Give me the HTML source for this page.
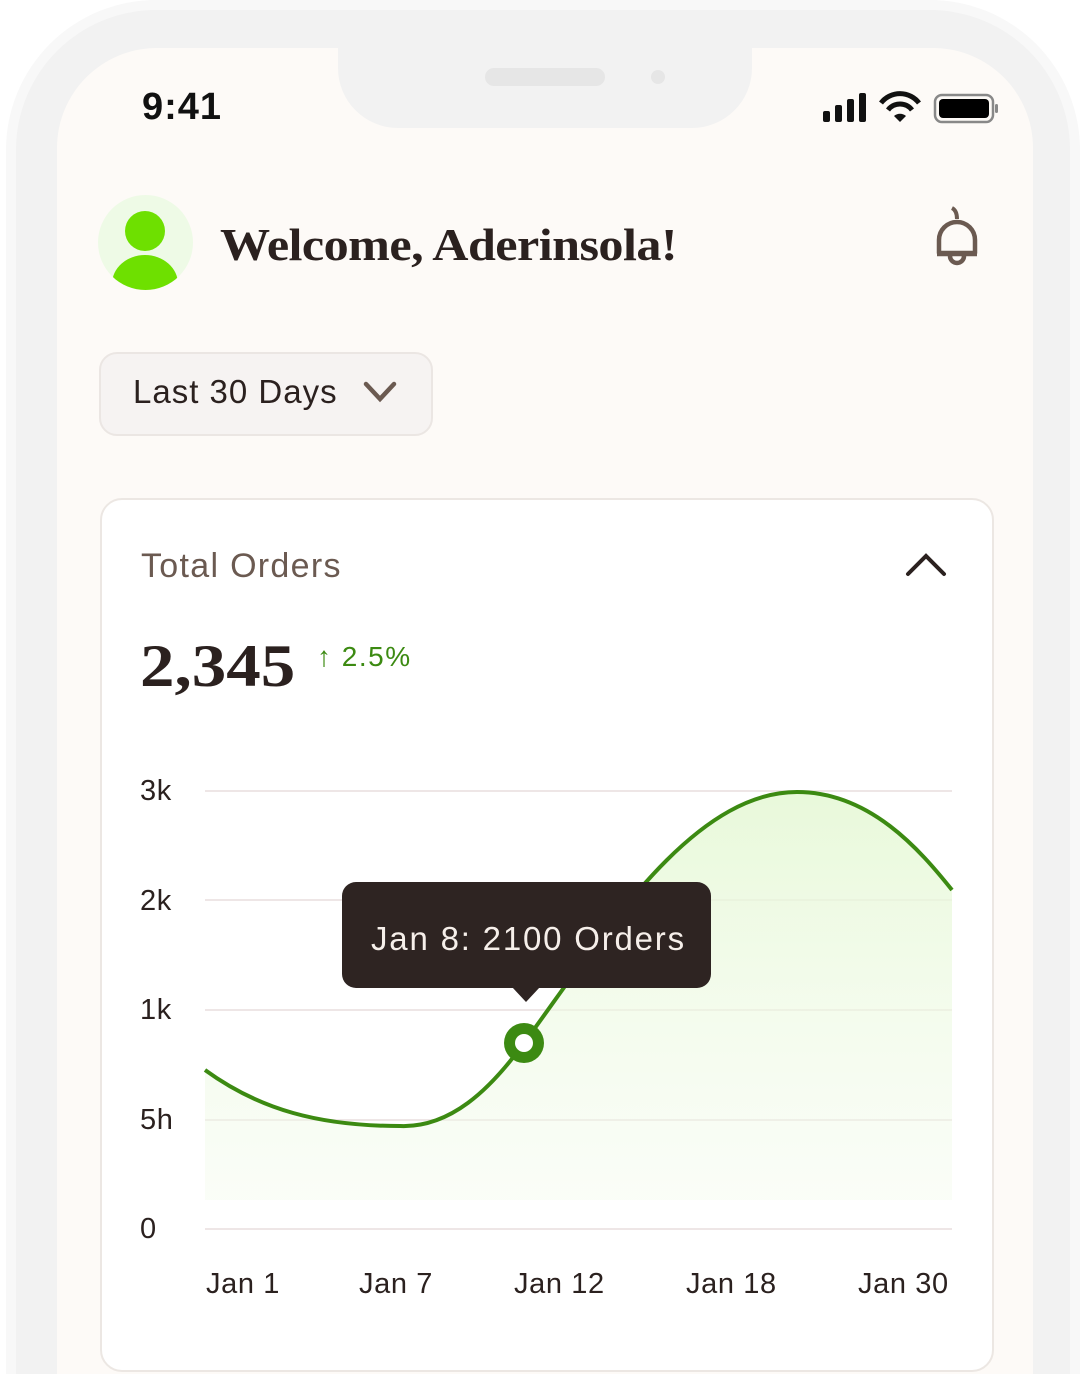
<!DOCTYPE html>
<html><head><meta charset="utf-8"><style>
html,body{margin:0;padding:0;width:1086px;height:1374px;overflow:hidden;background:#fff;font-family:"Liberation Sans",sans-serif}
.wrap{position:relative;width:1086px;height:1374px;overflow:hidden}
.frame{position:absolute;left:6px;top:0;width:1074px;height:1374px;background:#f8f8f8;border-radius:150px 150px 0 0}
.frame2{position:absolute;left:16px;top:10px;width:1054px;height:1364px;background:#f2f2f2;border-radius:140px 140px 0 0}
.screen{position:absolute;left:57px;top:48px;width:976px;height:1326px;background:#fdfaf7;border-radius:100px 100px 0 0}
.notch{position:absolute;left:338px;top:40px;width:414px;height:88px;background:#f2f2f2;border-radius:0 0 60px 60px}
.spk{position:absolute;left:485px;top:68px;width:120px;height:18px;background:#e6e6e6;border-radius:9px}
.cam{position:absolute;left:651px;top:70px;width:14px;height:14px;background:#e6e6e6;border-radius:7px}
.t{position:absolute;white-space:nowrap}
.card{position:absolute;left:100px;top:498px;width:890px;height:870px;background:#fff;border:2px solid #ece7e3;border-radius:22px}
.ax{font-size:29px;color:#2b211f;letter-spacing:0.6px}
</style></head><body><div class="wrap">
<div class="frame"></div><div class="frame2"></div><div class="screen"></div>
<div class="notch"></div><div class="spk"></div><div class="cam"></div>
<div class="t" style="left:142px;top:86px;font-size:38px;font-weight:bold;color:#111;letter-spacing:1px">9:41</div>
<svg style="position:absolute;left:820px;top:90px" width="180" height="40">
<rect x="3" y="21" width="7" height="11" rx="2" fill="#111"/><rect x="15" y="15" width="7" height="17" rx="2" fill="#111"/><rect x="27" y="9" width="7" height="23" rx="2" fill="#111"/><rect x="39" y="3" width="7" height="29" rx="2" fill="#111"/>
<path d="M61 13 A24 24 0 0 1 99 13" stroke="#111" stroke-width="5" fill="none"/><path d="M68 20 A15 15 0 0 1 92 20" stroke="#111" stroke-width="5" fill="none"/><path d="M74 26 L80 32 L86 26 A9 9 0 0 0 74 26Z" fill="#111"/>
<rect x="115" y="5" width="58" height="27" rx="7" fill="none" stroke="#888" stroke-width="2.5"/><rect x="119" y="9" width="50" height="19" rx="4" fill="#000"/><rect x="175" y="14" width="3" height="9" rx="1.5" fill="#888"/>
</svg>
<div style="position:absolute;left:98px;top:195px;width:95px;height:95px;border-radius:50%;background:#eefae6;overflow:hidden">
<div style="position:absolute;left:27px;top:16px;width:40px;height:40px;border-radius:50%;background:#6ee000"></div>
<div style="position:absolute;left:14px;top:60px;width:66px;height:58px;border-radius:50%;background:#6ee000"></div></div>
<div class="t" style="left:220px;top:218px;font-family:'Liberation Serif',serif;font-weight:bold;font-size:46px;color:#2b211f;letter-spacing:-0.5px;transform:scaleX(1.09);transform-origin:0 0">Welcome, Aderinsola!</div>
<svg style="position:absolute;left:930px;top:205px" width="56" height="70"><path d="M22 3 C26 5 27 10 27 14" stroke="#6b5a51" stroke-width="4" fill="none"/><path d="M9 48 V35 A18 18 0 0 1 45 35 V48 Z" stroke="#6b5a51" stroke-width="4.5" fill="none" stroke-linejoin="round"/><path d="M7 49 H47" stroke="#6b5a51" stroke-width="4.5"/><path d="M20 51 A7 7 0 0 0 34 51" stroke="#6b5a51" stroke-width="4.5" fill="none"/></svg>
<div style="position:absolute;left:99px;top:352px;width:330px;height:80px;background:#f6f3f2;border:2px solid #ebe6e3;border-radius:18px"></div>
<div class="t" style="left:133px;top:373px;font-size:33px;color:#2b211f;letter-spacing:1px">Last 30 Days</div>
<svg style="position:absolute;left:360px;top:378px" width="44" height="30"><path d="M6 6 L20 21 L34 6" stroke="#6b5a51" stroke-width="4.5" fill="none" stroke-linecap="round"/></svg>
<div class="card"></div>
<div class="t" style="left:141px;top:547px;font-size:34px;color:#6b5a51;letter-spacing:1.3px">Total Orders</div>
<svg style="position:absolute;left:900px;top:548px" width="52" height="34"><path d="M8 26 L26 8 L44 26" stroke="#2b211f" stroke-width="4" fill="none" stroke-linecap="round"/></svg>
<div class="t" style="left:140px;top:632px;font-family:'Liberation Serif',serif;font-weight:bold;font-size:60px;color:#2b211f;letter-spacing:0px;transform:scaleX(1.15);transform-origin:0 0">2,345</div>
<div class="t" style="left:317px;top:641px;font-size:28px;color:#3c8a12;letter-spacing:1.5px">↑ 2.5%</div>
<svg style="position:absolute;left:0;top:0" width="1086" height="1374">
<defs><linearGradient id="g" x1="0" y1="0" x2="0" y2="1"><stop offset="0" stop-color="#e6f8d6" stop-opacity="0.9"/><stop offset="1" stop-color="#f3fbec" stop-opacity="0.4"/></linearGradient></defs>
<g stroke="#eee6e6" stroke-width="2"><line x1="205" y1="791" x2="952" y2="791"/><line x1="205" y1="900" x2="952" y2="900"/><line x1="205" y1="1010" x2="952" y2="1010"/><line x1="205" y1="1120" x2="952" y2="1120"/><line x1="205" y1="1229" x2="952" y2="1229"/></g>
<path d="M205 1070 C260 1110 320 1126 400 1126 C450 1128 490 1090 524 1043 C600 940 690 792 797 792 C870 792 920 850 952 890 L952 1200 L205 1200 Z" fill="url(#g)"/>
<path d="M205 1070 C260 1110 320 1126 400 1126 C450 1128 490 1090 524 1043 C600 940 690 792 797 792 C870 792 920 850 952 890" stroke="#3c8a12" stroke-width="4" fill="none"/>
<rect x="342" y="882" width="369" height="106" rx="14" fill="#2e2422"/>
<path d="M512 987 L526 1002 L540 987Z" fill="#2e2422"/>
<circle cx="524" cy="1043" r="20" fill="#3c8a12"/><circle cx="524" cy="1043" r="9" fill="#fff"/>
</svg>
<div class="t" style="left:371px;top:920px;font-size:33px;color:#f6efea;letter-spacing:1.8px">Jan 8: 2100 Orders</div>
<div class="t ax" style="left:140px;top:775px">3k</div>
<div class="t ax" style="left:140px;top:885px">2k</div>
<div class="t ax" style="left:140px;top:994px">1k</div>
<div class="t ax" style="left:140px;top:1104px">5h</div>
<div class="t ax" style="left:140px;top:1213px">0</div>
<div class="t ax" style="left:206px;top:1268px">Jan 1</div>
<div class="t ax" style="left:359px;top:1268px">Jan 7</div>
<div class="t ax" style="left:514px;top:1268px">Jan 12</div>
<div class="t ax" style="left:686px;top:1268px">Jan 18</div>
<div class="t ax" style="left:858px;top:1268px">Jan 30</div>
</div></body></html>
